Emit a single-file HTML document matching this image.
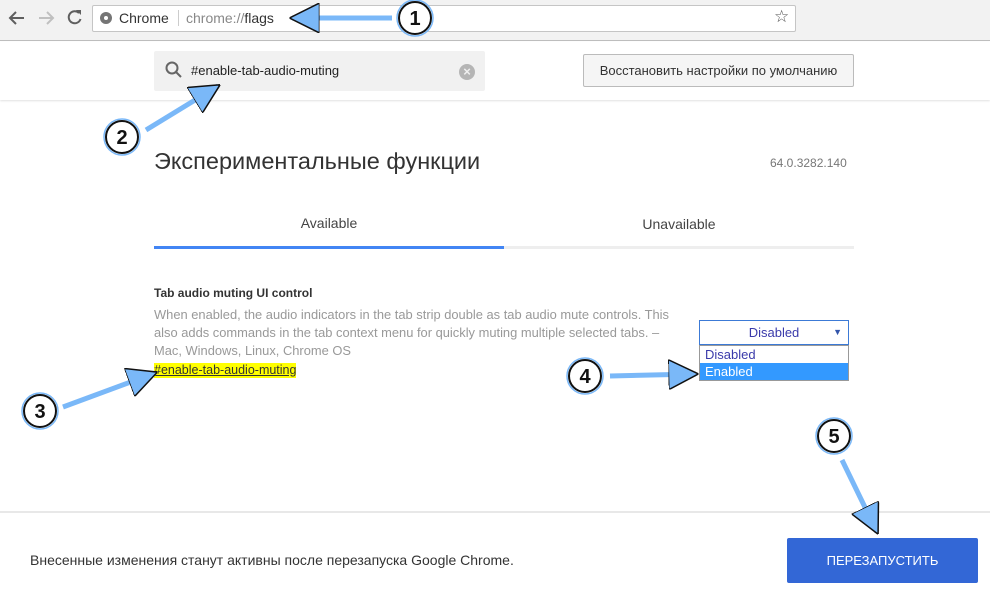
<!DOCTYPE html>
<html><head><meta charset="utf-8"><style>
*{margin:0;padding:0;box-sizing:border-box}
body{width:990px;height:595px;overflow:hidden;background:#fff;font-family:"Liberation Sans",sans-serif;position:relative;color:#333}
.abs{position:absolute}
</style></head><body>
<div class="abs" style="left:0;top:0;width:990px;height:41px;background:#f2f2f2;border-bottom:1px solid #bdbdbd"></div>
<div class="abs" style="left:92px;top:5px;width:704px;height:27px;background:#fff;border:1px solid #c5c5c5;border-radius:2px"></div>
<div class="abs" style="left:100px;top:12px;width:12px;height:12px;border-radius:50%;background:#757575"></div>
<div class="abs" style="left:104px;top:16px;width:4px;height:4px;border-radius:50%;background:#fff"></div>
<div class="abs" style="left:119px;top:10px;font-size:14px;color:#333">Chrome</div>
<div class="abs" style="left:178px;top:10px;width:1px;height:16px;background:#ccc"></div>
<div class="abs" style="left:186px;top:10px;font-size:14px;color:#888">chrome://<span style="color:#333">flags</span></div>
<div class="abs" style="left:774px;top:7px;font-size:17px;color:#555">☆</div>
<svg class="abs" style="left:0;top:0" width="90" height="40">
<path d="M24 18H11M16 12l-6 6 6 6" stroke="#5f5f5f" stroke-width="2" fill="none"/>
<path d="M39 18h13M47 12l6 6-6 6" stroke="#c0c0c0" stroke-width="2" fill="none"/>
<path d="M79 13a6 6 0 1 0 1.5 6" stroke="#5f5f5f" stroke-width="2" fill="none"/><path d="M76 10h5v5z" fill="#5f5f5f"/>
</svg>
<div class="abs" style="left:0;top:42px;width:990px;height:58px;background:#fff;box-shadow:0 1px 2px rgba(0,0,0,.12)"></div>
<div class="abs" style="left:154px;top:51px;width:331px;height:40px;background:#f1f1f1;border-radius:2px"></div>
<svg class="abs" style="left:164px;top:60px" width="20" height="20"><circle cx="8" cy="8" r="5.5" stroke="#666" stroke-width="2" fill="none"/><path d="M12 12l5 5" stroke="#666" stroke-width="2"/></svg>
<div class="abs" style="left:191px;top:63px;font-size:13px;color:#222">#enable-tab-audio-muting</div>
<div class="abs" style="left:459px;top:64px;width:16px;height:16px;border-radius:50%;background:#b5b5b5;color:#f1f1f1;font-size:13px;line-height:16px;text-align:center;font-weight:bold">×</div>
<div class="abs" style="left:583px;top:54px;width:271px;height:33px;background:#f5f5f5;border:1px solid #bbb;border-radius:2px;font-size:13px;line-height:31px;text-align:center;color:#333">Восстановить настройки по умолчанию</div>
<div class="abs" style="left:154px;top:148px;font-size:23.5px;color:#333">Экспериментальные функции</div>
<div class="abs" style="left:770px;top:156px;font-size:12px;color:#777">64.0.3282.140</div>
<div class="abs" style="left:154px;top:215px;width:350px;text-align:center;font-size:14px;color:#444">Available</div>
<div class="abs" style="left:504px;top:216px;width:350px;text-align:center;font-size:14px;color:#444">Unavailable</div>
<div class="abs" style="left:154px;top:246px;width:700px;height:3px;background:#eee"></div>
<div class="abs" style="left:154px;top:246px;width:350px;height:3px;background:#4285f4"></div>
<div class="abs" style="left:154px;top:286px;font-size:12px;font-weight:bold;color:#333">Tab audio muting UI control</div>
<div class="abs" style="left:154px;top:306px;width:560px;font-size:12.9px;line-height:18px;color:#999;white-space:nowrap">When enabled, the audio indicators in the tab strip double as tab audio mute controls. This<br>also adds commands in the tab context menu for quickly muting multiple selected tabs. –<br>Mac, Windows, Linux, Chrome OS</div>
<div class="abs" style="left:154px;top:363px;font-size:12.5px;line-height:15px;background:#ff0;color:#333;text-decoration:underline">#enable-tab-audio-muting</div>
<div class="abs" style="left:699px;top:320px;width:150px;height:25px;border:1px solid #3c7ad6;font-size:13px;line-height:23px;text-align:center;color:#3a3aaa">Disabled<span style="position:absolute;right:6px;font-size:9px;color:#3355aa">▼</span></div>
<div class="abs" style="left:699px;top:345px;width:150px;height:36px;border:1px solid #999;background:#fff;font-size:13px;line-height:17px;color:#3a3aaa"><div style="padding-left:5px">Disabled</div><div style="padding-left:5px;background:#3399ff;color:#fff">Enabled</div></div>
<div class="abs" style="left:0;top:511px;width:990px;height:2px;background:#e8e8e8"></div>
<div class="abs" style="left:30px;top:552px;font-size:14px;color:#333">Внесенные изменения станут активны после перезапуска Google Chrome.</div>
<div class="abs" style="left:787px;top:538px;width:191px;height:45px;background:#3367d6;border-radius:2px;color:#fff;font-size:13px;line-height:45px;text-align:center">ПЕРЕЗАПУСТИТЬ</div>
<svg class="abs" style="left:0;top:0" width="990" height="595">
<defs><marker id="h" markerWidth="6" markerHeight="6" refX="5.5" refY="3" orient="auto" markerUnits="strokeWidth"><path d="M0 0L6 3 0 6z" fill="#7ab8f8" stroke="#111" stroke-width=".3"/></marker></defs>
<g stroke="#7ab8f8" stroke-width="5" fill="none" marker-end="url(#h)">
<line x1="392" y1="18" x2="292" y2="18"/>
<line x1="146" y1="130" x2="218" y2="86"/>
<line x1="63" y1="407" x2="155" y2="373"/>
<line x1="610" y1="376" x2="696" y2="374"/>
<line x1="842" y1="460" x2="877" y2="532"/>
</g>
<g fill="#fff" stroke="#111" stroke-width="2">
<circle cx="415" cy="18" r="16"/><circle cx="122" cy="137" r="16"/><circle cx="40" cy="411" r="16"/><circle cx="585" cy="376" r="16"/><circle cx="834" cy="436" r="16"/>
</g>
<g fill="none" stroke="#7ab8f8" stroke-width="1.5">
<circle cx="415" cy="18" r="18"/><circle cx="122" cy="137" r="18"/><circle cx="40" cy="411" r="18"/><circle cx="585" cy="376" r="18"/><circle cx="834" cy="436" r="18"/>
</g>
<g font-family="Liberation Sans" font-weight="bold" font-size="20" text-anchor="middle" fill="#111">
<text x="415" y="25">1</text><text x="122" y="144">2</text><text x="40" y="418">3</text><text x="585" y="383">4</text><text x="834" y="443">5</text>
</g>
</svg>
</body></html>
